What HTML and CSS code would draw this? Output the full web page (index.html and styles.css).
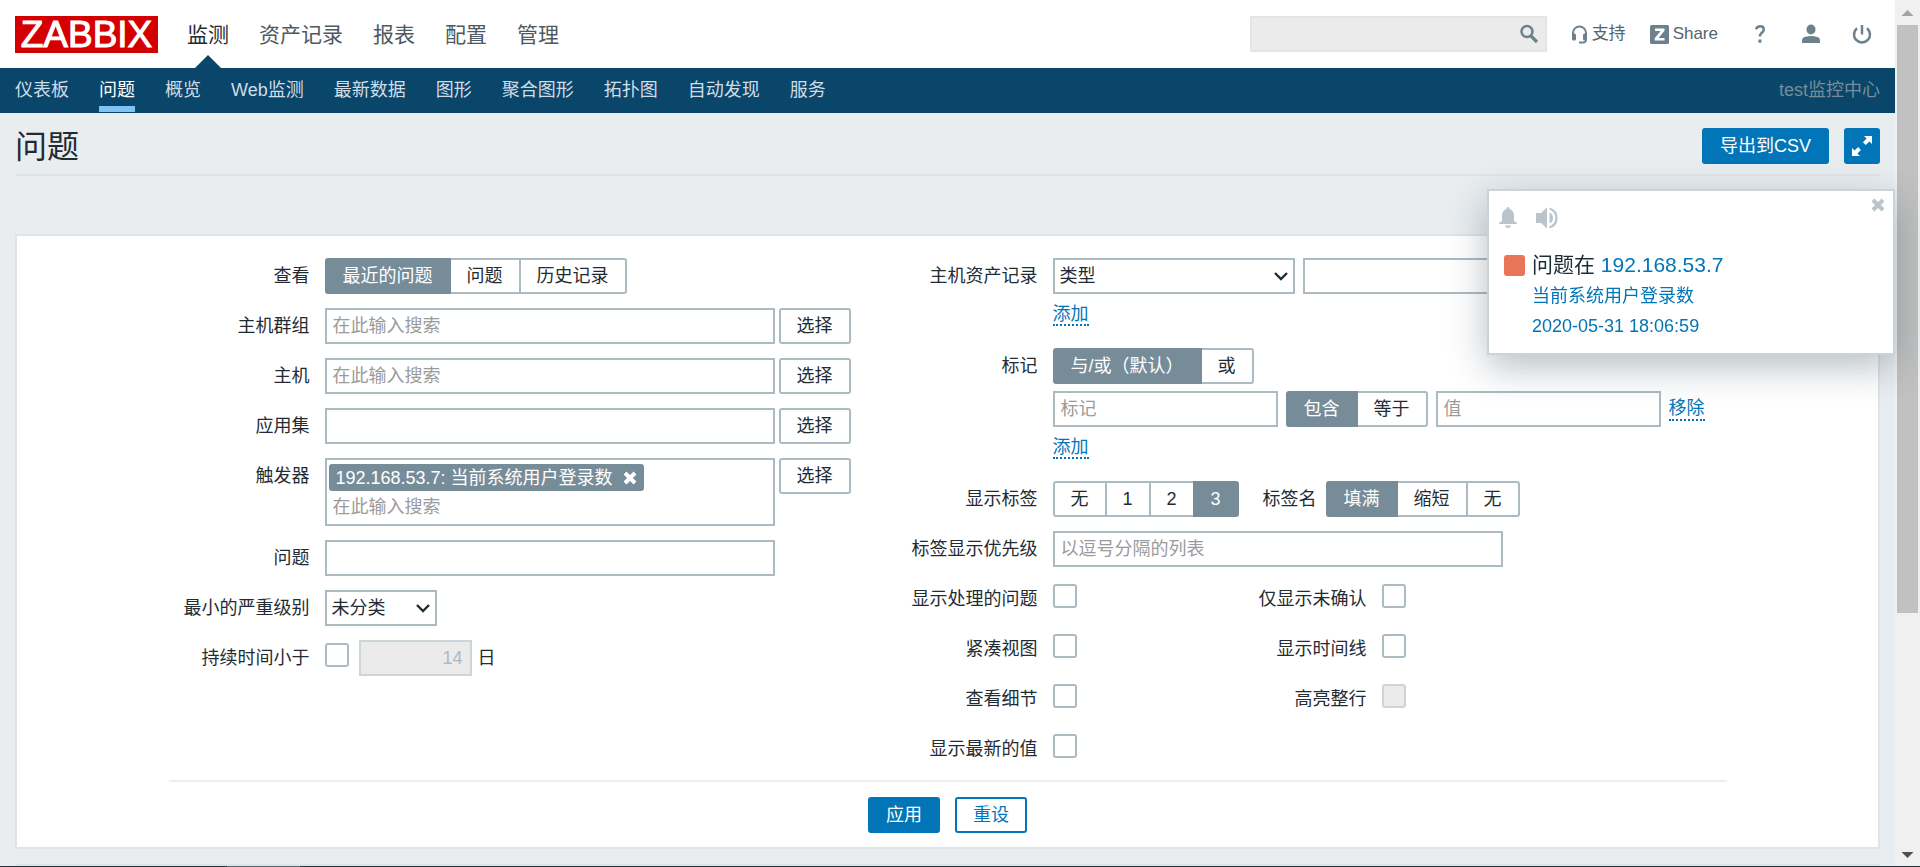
FILE: index.html
```html
<!DOCTYPE html>
<html lang="zh-CN">
<head>
<meta charset="utf-8">
<title>问题</title>
<link rel="stylesheet" href="styles.css">
</head>
<body>
<div class="page">
  <header class="top">
    <a class="logo" href="#">ZABBIX</a>
    <nav class="menu">
      <a class="active" href="#">监测</a>
      <a href="#">资产记录</a>
      <a href="#">报表</a>
      <a href="#">配置</a>
      <a href="#">管理</a>
    </nav>
    <div class="tools">
      <form class="search" role="search">
        <input type="text" aria-label="搜索">
        <button type="button" aria-label="搜索">
          <svg width="20" height="20" viewBox="0 0 20 20"><circle cx="8" cy="7.500" r="5.500" fill="none" stroke="#6b828e" stroke-width="2.500"/><path d="M12 12l6 6" stroke="#6b828e" stroke-width="3.200"/></svg>
        </button>
      </form>
      <a class="tool" href="#">
        <svg width="17" height="19" viewBox="0 0 17 19"><path d="M2 10.500V8a6.500 6.500 0 0 1 13 0v2.500" fill="none" stroke="#6b828e" stroke-width="2"/><rect x="1" y="8.500" width="4" height="7" rx="1.500" fill="#6b828e"/><rect x="12" y="8.500" width="4" height="7" rx="1.500" fill="#6b828e"/><path d="M15 14v1q0 2.500-3 2.500H8" fill="none" stroke="#6b828e" stroke-width="1.800"/></svg>
        支持
      </a>
      <a class="tool" href="#">
        <svg width="19" height="19" viewBox="0 0 19 19"><rect width="19" height="19" rx="1.500" fill="#6b828e"/><path d="M5 3.500h9.500v2.200L8.600 13h5.900v2.500H4.700v-2.200L10.600 6H5z" fill="#fff"/></svg>
        Share
      </a>
      <div class="icons">
        <a href="#" aria-label="帮助"><svg width="20" height="20" viewBox="0 0 20 20"><path d="M6 5.200q1.200-2.900 4.200-2.900 3.600 0 3.600 3.200 0 1.700-2 3.300-1.900 1.500-1.900 3.700" fill="none" stroke="#6b828e" stroke-width="2.500"/><rect x="8.400" y="15.500" width="3" height="3.200" fill="#6b828e"/></svg></a>
        <a href="#" aria-label="用户"><svg width="20" height="20" viewBox="0 0 20 20"><ellipse cx="10" cy="5.500" rx="4.500" ry="5" fill="#6b828e"/><path d="M1 19v-2.500q0-3 3.500-3.800 5.500-1.200 11 0Q19 13.500 19 16.500V19z" fill="#6b828e"/></svg></a>
        <a href="#" aria-label="退出"><svg width="20" height="20" viewBox="0 0 20 20"><path d="M5 4.200a8 8 0 1 0 10 0M10 1v9.500" fill="none" stroke="#6b828e" stroke-width="2.500"/></svg></a>
      </div>
    </div>
  </header>

  <nav class="submenu">
    <a href="#">仪表板</a>
    <a class="active" href="#">问题</a>
    <a href="#">概览</a>
    <a href="#">Web监测</a>
    <a href="#">最新数据</a>
    <a href="#">图形</a>
    <a href="#">聚合图形</a>
    <a href="#">拓扑图</a>
    <a href="#">自动发现</a>
    <a href="#">服务</a>
    <span class="server">test监控中心</span>
  </nav>

  <main>
    <div class="heading">
      <h1>问题</h1>
      <button class="btn primary export" type="button">导出到CSV</button>
      <button class="btn primary full" type="button" aria-label="全屏">
        <svg width="22" height="22" viewBox="0 0 22 22"><path d="M13 1h8v8l-2.600-2.600-3.700 3.700-2.800-2.800L15.600 3.600zM1 13v8h8l-2.600-2.600 3.500-3.500-2.800-2.800-3.500 3.500z" fill="#fff"/></svg>
      </button>
    </div>

    <form class="card">
      <div class="columns">
        <div class="fields">
          <span class="label">查看</span>
          <div class="line">
            <div class="segment" role="radiogroup" aria-label="查看">
              <input type="radio" name="show" id="show1" checked><label for="show1">最近的问题</label>
              <input type="radio" name="show" id="show2"><label for="show2">问题</label>
              <input type="radio" name="show" id="show3"><label for="show3">历史记录</label>
            </div>
          </div>

          <label class="label" for="groups">主机群组</label>
          <div class="line tight"><input class="box wide" id="groups" type="text" placeholder="在此输入搜索"><button class="btn plain" type="button">选择</button></div>

          <label class="label" for="hosts">主机</label>
          <div class="line tight"><input class="box wide" id="hosts" type="text" placeholder="在此输入搜索"><button class="btn plain" type="button">选择</button></div>

          <label class="label" for="apps">应用集</label>
          <div class="line tight"><input class="box wide" id="apps" type="text"><button class="btn plain" type="button">选择</button></div>

          <label class="label" for="triggers">触发器</label>
          <div class="line tight">
            <div class="multi wide">
              <span class="chip">192.168.53.7: 当前系统用户登录数
                <button type="button" aria-label="移除"><svg width="14" height="14" viewBox="0 0 14 14"><path d="M2 2l10 10M12 2L2 12" stroke="#fff" stroke-width="4"/></svg></button>
              </span>
              <input id="triggers" type="text" placeholder="在此输入搜索">
            </div>
            <button class="btn plain" type="button">选择</button>
          </div>

          <label class="label" for="problem">问题</label>
          <div class="line"><input class="box wide" id="problem" type="text"></div>

          <label class="label" for="severity">最小的严重级别</label>
          <div class="line">
            <div class="select severity">
              <select class="box" id="severity"><option>未分类</option></select>
              <svg width="14" height="9" viewBox="0 0 14 9"><path d="M1 1l6 6 6-6" fill="none" stroke="#1f2c33" stroke-width="2.400"/></svg>
            </div>
          </div>

          <label class="label" for="age">持续时间小于</label>
          <div class="line age">
            <input class="check" id="age" type="checkbox">
            <input class="box days" id="days" type="text" value="14" disabled>
            <label for="days">日</label>
          </div>
        </div>

        <div class="fields right">
          <label class="label" for="inventory">主机资产记录</label>
          <div class="stack">
            <div class="line">
              <div class="select inventory">
                <select class="box" id="inventory"><option>类型</option></select>
                <svg width="14" height="9" viewBox="0 0 14 9"><path d="M1 1l6 6 6-6" fill="none" stroke="#1f2c33" stroke-width="2.400"/></svg>
              </div>
              <input class="box half" type="text" aria-label="资产值">
            </div>
            <div class="add"><a class="link" href="#">添加</a></div>
          </div>

          <span class="label">标记</span>
          <div class="stack">
            <div class="line tags">
              <div class="segment" role="radiogroup" aria-label="标记">
                <input type="radio" name="eval" id="eval1" checked><label for="eval1">与/或（默认）</label>
                <input type="radio" name="eval" id="eval2"><label for="eval2">或</label>
              </div>
            </div>
            <div class="line">
              <input class="box half" type="text" placeholder="标记" aria-label="标记">
              <div class="segment" role="radiogroup" aria-label="运算符">
                <input type="radio" name="op" id="op1" checked><label for="op1">包含</label>
                <input type="radio" name="op" id="op2"><label for="op2">等于</label>
              </div>
              <input class="box half" type="text" placeholder="值" aria-label="值">
              <a class="link" href="#">移除</a>
            </div>
            <div class="add"><a class="link" href="#">添加</a></div>
          </div>

          <span class="label">显示标签</span>
          <div class="line">
            <div class="segment" role="radiogroup" aria-label="显示标签">
              <input type="radio" name="tags" id="tags0"><label for="tags0">无</label>
              <input type="radio" name="tags" id="tags1"><label for="tags1">1</label>
              <input type="radio" name="tags" id="tags2"><label for="tags2">2</label>
              <input type="radio" name="tags" id="tags3" checked><label for="tags3">3</label>
            </div>
            <span class="tagname">标签名</span>
            <div class="segment" role="radiogroup" aria-label="标签名">
              <input type="radio" name="tagname" id="tn1" checked><label for="tn1">填满</label>
              <input type="radio" name="tagname" id="tn2"><label for="tn2">缩短</label>
              <input type="radio" name="tagname" id="tn3"><label for="tn3">无</label>
            </div>
          </div>

          <label class="label" for="priority">标签显示优先级</label>
          <div class="line"><input class="box wide" id="priority" type="text" placeholder="以逗号分隔的列表"></div>

          <label class="label" for="suppressed">显示处理的问题</label>
          <div class="pair"><input class="check" id="suppressed" type="checkbox"><label for="unack">仅显示未确认</label><input class="check" id="unack" type="checkbox"></div>

          <label class="label" for="compact">紧凑视图</label>
          <div class="pair"><input class="check" id="compact" type="checkbox"><label for="timeline">显示时间线</label><input class="check" id="timeline" type="checkbox"></div>

          <label class="label" for="details">查看细节</label>
          <div class="pair"><input class="check" id="details" type="checkbox"><label for="highlight">高亮整行</label><input class="check" id="highlight" type="checkbox" disabled></div>

          <label class="label" for="latest">显示最新的值</label>
          <div class="pair"><input class="check" id="latest" type="checkbox"></div>
        </div>
      </div>
      <div class="actions">
        <button class="btn primary" type="button">应用</button>
        <button class="btn outline" type="button">重设</button>
      </div>
    </form>

    <section class="results" aria-label="结果"></section>
  </main>
</div>

<aside class="notice">
  <button class="close" type="button" aria-label="关闭"><svg width="14" height="14" viewBox="0 0 14 14"><path d="M2 2l10 10M12 2L2 12" stroke="#b9c5cb" stroke-width="4"/></svg></button>
  <div class="controls">
    <button type="button" aria-label="暂停"><svg width="18" height="22" viewBox="0 0 18 22"><path d="M9 0q1.500 0 1.500 2Q15 3.500 15 8.500V14l3 2v1H0v-1l3-2V8.500Q3 3.500 7.500 2 7.500 0 9 0zM6 18.500h6Q11.500 21 9 21t-3-2.500z" fill="#b9c5cb"/></svg></button>
    <button type="button" aria-label="静音"><svg width="22" height="22" viewBox="0 0 22 22"><path d="M0 6h5l6-5.500v21L5 16H0zM13.500 5.500q3.500 1.500 3.500 5.500t-3.500 5.500z" fill="#b9c5cb"/><path d="M13.500 1.500q7 2.500 7 9.500t-7 9.500" fill="none" stroke="#b9c5cb" stroke-width="2.300"/></svg></button>
  </div>
  <div class="event">
    <span class="level"></span>
    <div>
      <p class="host">问题在 <a href="#">192.168.53.7</a></p>
      <p><a href="#">当前系统用户登录数</a></p>
      <p><a href="#">2020-05-31 18:06:59</a></p>
    </div>
  </div>
</aside>

<div class="scrollbar" aria-hidden="true">
  <svg width="25" height="25" viewBox="0 0 25 25"><path d="M12.500 10l6 6h-12z" fill="#a3a3a3"/></svg>
  <div class="track"><div class="thumb"></div></div>
  <svg width="25" height="25" viewBox="0 0 25 25"><path d="M12.500 16l6-6h-12z" fill="#505050"/></svg>
</div>
<div class="edge" aria-hidden="true"><span></span></div>
</body>
</html>
```

FILE: styles.css
```css
* { box-sizing: border-box; }

body {
  margin: 0;
  min-height: 100vh;
  display: grid;
  grid-template-columns: minmax(0, 1fr) 25px;
  background: #e9edf0;
  color: #1f2c33;
  font: 18px/20px "Liberation Sans", "Noto Sans CJK SC", sans-serif;
}

a { color: #0275b8; text-decoration: none; }
button, input, select { font: inherit; color: inherit; margin: 0; }
button { cursor: pointer; }
svg { display: block; flex: none; }

/* header */
.top {
  display: flex;
  align-items: center;
  height: 68px;
  padding: 0 15px;
  background: #fff;
}
.logo {
  width: 143px;
  height: 37px;
  background: #d40000;
  color: #fff;
  font-size: 37px;
  line-height: 37px;
  text-align: center;
  -webkit-text-stroke: 1px #fff;
}
.menu {
  display: flex;
  align-self: stretch;
  gap: 30px;
  margin-left: 29px;
  font-size: 21px;
  line-height: 70px;
}
.menu a { color: #4c5a62; }
.menu .active { position: relative; color: #1f2c33; }
.menu .active::after {
  content: "";
  position: absolute;
  left: 50%;
  bottom: 0;
  margin-left: -13px;
  border: 13px solid transparent;
  border-top: 0;
  border-bottom-color: #0a466a;
}
.tools {
  display: flex;
  align-items: center;
  gap: 24px;
  margin-left: auto;
}
.search {
  display: flex;
  align-items: center;
  width: 297px;
  height: 36px;
  border: 2px solid #e5e5e5;
  background: #ebebeb;
}
.search input {
  flex: 1;
  min-width: 0;
  height: 32px;
  border: 0;
  background: none;
}
.search button, .icons a, .controls button, .close, .chip button {
  border: 0;
  padding: 0;
  background: none;
}
.search button { padding-right: 6px; }
.tool {
  display: flex;
  align-items: center;
  gap: 4px;
  color: #56656d;
  font-size: 17px;
}
.icons { display: flex; gap: 15px; }
.icons a {
  display: flex;
  justify-content: center;
  width: 36px;
}

.submenu {
  display: flex;
  gap: 30px;
  height: 45px;
  padding: 0 15px;
  background: #0a466a;
  line-height: 45px;
}
.submenu a { height: 44px; color: #cfdde6; }
.submenu .active { color: #fff; border-bottom: 6px solid #7ec5f3; }
.server { margin-left: auto; color: #768d99; }

/* page heading */
main { padding: 0 15px; }
.heading {
  display: flex;
  align-items: center;
  gap: 15px;
  height: 63px;
  margin-bottom: 58px;
  padding-top: 5px;
  border-bottom: 2px solid #dfe4e7;
}
h1 {
  flex: 1;
  margin: 0;
  font-size: 32px;
  font-weight: 400;
  line-height: 56px;
  height: 54px;
}

/* buttons */
.btn {
  height: 36px;
  padding: 0 16px;
  border: 2px solid #acbbc2;
  border-radius: 3px;
  background: #fff;
  line-height: 32px;
}
.primary { border-color: #0275b8; background: #0275b8; color: #fff; }
.outline { border-color: #0275b8; color: #0275b8; }
.full { width: 36px; padding: 0 5px; }

/* filter */
.card {
  border: 2px solid #dfe4e7;
  background: #fff;
  padding: 22px 15px 14px;
}
.columns {
  display: flex;
  justify-content: space-between;
  max-width: 1558px;
  margin: 0 auto;
  padding-bottom: 13px;
  border-bottom: 2px solid #ebeef0;
}
.fields {
  display: grid;
  grid-template-columns: 141px auto;
  align-content: start;
  gap: 14px 15px;
}
.right { grid-template-columns: 126px 674px; }
.label { line-height: 36px; text-align: right; }
.line { display: flex; align-items: center; gap: 8px; }
.tight { gap: 4px; align-items: flex-start; }
.tags { margin-bottom: 7px; }
.add { line-height: 40px; }
.link { border-bottom: 2px dotted #0275b8; line-height: 22px; }

.box {
  height: 36px;
  padding: 0 6px;
  border: 2px solid #acbbc2;
  border-radius: 0;
  background: #fff;
}
::placeholder { color: #9b9b9b; opacity: 1; }
.wide { width: 450px; }
.half { width: 225px; }

.multi {
  padding: 4px 2px 0;
  border: 2px solid #acbbc2;
}
.multi input {
  display: block;
  width: 100%;
  height: 33px;
  padding: 0 4px;
  border: 0;
}
.chip {
  display: flex;
  align-items: center;
  gap: 10px;
  width: max-content;
  height: 27px;
  padding: 0 7px;
  border-radius: 3px;
  background: #768d99;
  color: #fff;
}

.select { position: relative; }
.select select {
  width: 100%;
  padding: 0 5px;
  appearance: none;
}
.select svg {
  position: absolute;
  right: 7px;
  top: 14px;
  pointer-events: none;
}
.severity { width: 112px; }
.inventory { width: 242px; }

.check {
  appearance: none;
  flex: none;
  width: 24px;
  height: 24px;
  margin-bottom: 6px;
  border: 2px solid #acbbc2;
  border-radius: 3px;
  background: #fff;
}
.check:disabled { border-color: #ccd5d9; background: #ebebeb; }
.age { gap: 6px; }
.days { width: 113px; margin-left: 4px; padding: 0 7px; text-align: right; }
.days:disabled { border-color: #ccd5d9; background: #ebebeb; color: #acbbc2; }
.tagname { margin: 0 1px 0 16px; }

.segment { display: flex; position: relative; }
.segment input { position: absolute; opacity: 0; }
.segment label {
  height: 36px;
  margin-left: -2px;
  padding: 0 16px;
  border: 2px solid #acbbc2;
  line-height: 32px;
}
.segment label:first-of-type { margin-left: 0; border-radius: 3px 0 0 3px; }
.segment label:last-of-type { border-radius: 0 3px 3px 0; }
.segment input:checked + label {
  z-index: 1;
  border-color: #768d99;
  background: #768d99;
  color: #fff;
}

.pair {
  display: grid;
  grid-template-columns: 24px 1fr 24px;
  align-items: center;
  gap: 15px;
  width: 353px;
  height: 36px;
}
.pair label { text-align: right; }
.actions {
  display: flex;
  justify-content: center;
  gap: 15px;
  padding-top: 15px;
}
.results {
  margin-top: 15px;
  border-top: 2px solid #dfe4e7;
}

/* notification */
.notice {
  position: fixed;
  top: 189px;
  right: 25px;
  width: 408px;
  padding: 16px 15px 12px;
  border: 2px solid #c9d3d8;
  background: #fff;
  box-shadow: 0 12px 36px rgba(31, 54, 70, 0.32);
}
.close { position: absolute; top: 7px; right: 8px; }
.controls { display: flex; gap: 19px; margin: 0 -5px; }
.event { display: flex; gap: 7px; margin-top: 20px; }
.level {
  width: 21px;
  height: 21px;
  margin-top: 6px;
  border-radius: 3px;
  background: #e97659;
}
.event p { margin: 0; line-height: 30px; }
.event .host { font-size: 21px; line-height: 32px; }

/* window frame */
.scrollbar {
  display: flex;
  flex-direction: column;
  height: 100vh;
  background: #f0f0f0;
}
.track { flex: 1; padding: 0 2px; }
.thumb { height: 72%; background: #c1c1c1; }
.edge {
  position: fixed;
  left: 0;
  right: 0;
  bottom: 0;
  height: 1px;
  padding-left: 227px;
  background: #22333b;
}
.edge span { display: block; width: 73px; height: 1px; background: #56656d; }
```
